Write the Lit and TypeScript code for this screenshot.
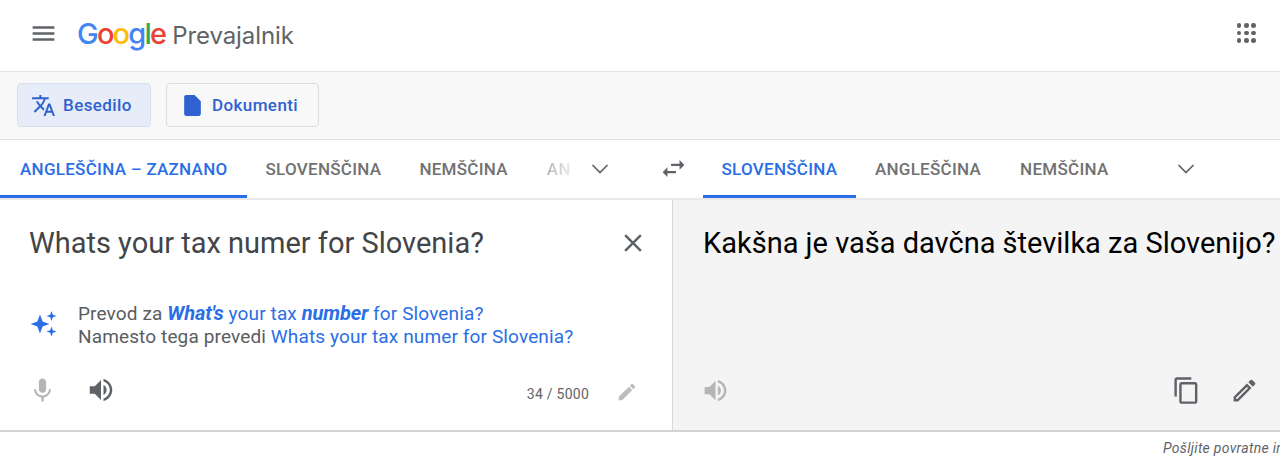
import { LitElement, html, css } from "lit";
import { customElement } from "lit/decorators.js";

const icon = (d: string, size: number, color: string, cls = "") => html`<svg class=${cls} width=${size} height=${size} viewBox="0 0 24 24" fill=${color}><path d=${d}></path></svg>`;
const chevron = html`<svg width="18" height="10" viewBox="0 0 18 10" fill="none" stroke="#5f6368" stroke-width="1.7"><path d="M1.500 1 9 8.500 16.500 1"></path></svg>`;

const SPEAKER = "M3 9v6h4l5 5V4L7 9H3zm13.5 3c0-1.77-1.02-3.29-2.5-4.03v8.05c1.48-.73 2.5-2.25 2.5-4.02zM14 3.23v2.06c2.89.86 5 3.54 5 6.71s-2.11 5.85-5 6.71v2.06c4.01-.91 7-4.49 7-8.77s-2.99-7.86-7-8.77z";
const PENCIL = "M3 17.25V21h3.75L17.81 9.94l-3.75-3.75L3 17.25zM20.71 7.04c.39-.39.39-1.02 0-1.41l-2.34-2.34c-.39-.39-1.02-.39-1.41 0l-1.83 1.83 3.75 3.75 1.83-1.83z";
const PENCIL_OUT = "M3 17.25V21h3.75L17.81 9.94l-3.75-3.75L3 17.25zM5.92 19H5v-.92l9.06-9.06.92.92L5.92 19zM20.71 5.63l-2.34-2.34c-.2-.2-.45-.29-.71-.29s-.51.1-.7.29l-1.83 1.83 3.75 3.75 1.83-1.83c.39-.39.39-1.02 0-1.41z";
const COPY = "M16 1H4c-1.1 0-2 .9-2 2v14h2V3h12V1zm3 4H8c-1.1 0-2 .9-2 2v14c0 1.1.9 2 2 2h11c1.1 0 2-.9 2-2V7c0-1.1-.9-2-2-2zm0 16H8V7h11v14z";
const MIC = "M12 14c1.66 0 3-1.34 3-3V5c0-1.66-1.34-3-3-3S9 3.34 9 5v6c0 1.66 1.34 3 3 3zm5.3-3c0 3-2.54 5.1-5.3 5.1S6.7 14 6.7 11H5c0 3.41 2.72 6.23 6 6.72V21h2v-3.28c3.28-.48 6-3.3 6-6.72h-1.7z";
const DOC = "M14 2H6c-1.1 0-2 .9-2 2v16c0 1.1.9 2 2 2h12c1.1 0 2-.9 2-2V8l-6-6z";
const TRANSLATE = "M12.87 15.07l-2.54-2.51.03-.03c1.74-1.94 2.98-4.17 3.71-6.53H17V4h-7V2H8v2H1v1.99h11.17C11.5 7.92 10.44 9.75 9 11.35 8.07 10.32 7.3 9.19 6.69 8h-2c.73 1.63 1.73 3.17 2.98 4.56l-5.09 5.02L4 19l5-5 3.11 3.11.76-2.04zM18.5 10h-2L12 22h2l1.12-3h4.75L21 22h2l-4.5-12zm-2.62 7l1.62-4.33L19.12 17h-3.24z";
const SWAP = "M6.99 11L3 15l3.99 4v-3H14v-2H6.99v-3zM21 9l-3.99-4v3H10v2h7.01v3L21 9z";
const MENU = "M3 18h18v-2H3v2zm0-5h18v-2H3v2zm0-7v2h18V6H3z";
const CLOSE = "M19 6.41L17.59 5 12 10.59 6.41 5 5 6.41 10.59 12 5 17.59 6.41 19 12 13.41 17.59 19 19 17.59 13.41 12z";

@customElement("app-root")
export class AppRoot extends LitElement {
  static styles = css`
    :host { display: block; width: 1280px; height: 462px; overflow: hidden; background: #fff; font-family: Roboto, "Liberation Sans", sans-serif; color: #3c4043; }
    svg { display: block; flex: none; }
    header { height: 72px; box-sizing: border-box; display: flex; align-items: center; padding: 0 24px 5px 29px; border-bottom: 1px solid #e4e5e7; }
    .logo { display: flex; align-items: baseline; margin-left: 19px; flex: 1; font-family: Inter, sans-serif; }
    .g { font-size: 29px; letter-spacing: -1.8px; font-weight: 500; line-height: 1; }
    .b { color: #4285f4; } .r { color: #ea4335; } .y { color: #fbbc05; } .gn { color: #34a853; }
    .pname { font-size: 24px; letter-spacing: -0.1px; color: #5f6368; margin-left: 7px; line-height: 1; }
    .apps { display: grid; grid-template-columns: repeat(3, 4.6px); gap: 2.8px; }
    .apps i { width: 4.6px; height: 4.6px; border-radius: 50%; background: #5f6368; }
    .bar { height: 68px; box-sizing: border-box; background: #f8f8f9; border-bottom: 1px solid #e0e1e3; display: flex; align-items: flex-start; gap: 15px; padding: 11px 0 0 17px; }
    .btn { height: 44px; box-sizing: border-box; border: 1px solid #dadce0; border-radius: 4px; display: flex; align-items: center; gap: 7px; padding-left: 13px; font-size: 17px; font-weight: 500; color: #2f62d0; letter-spacing: .4px; }
    .btn.on { background: #e6ecf8; border-color: #d8dfec; width: 134px; }
    .btn.off { width: 153px; }
    .tabs { height: 60px; box-sizing: border-box; display: flex; border-bottom: 2px solid #e8e8e8; }
    .side { display: flex; position: relative; height: 58px; }
    .side.l { width: 639px; }
    .side.r { flex: 1; }
    .tab { height: 58px; box-sizing: border-box; padding: 0 19px 1px; display: flex; align-items: center; font-size: 17px; font-weight: 500; letter-spacing: .28px; color: #717171; white-space: nowrap; }
    .side.l .tab:first-child { padding-left: 20px; padding-right: 19px; }
    .side.r .tab:first-child { padding-left: 18.500px; padding-right: 18.500px; }
    .side.r .tab:nth-child(3) { padding-left: 20px; }
    .tab.on { color: #2a6ee6; position: relative; }
    .tab.on::after { content: ""; position: absolute; left: 0; right: 0; bottom: 0; height: 3px; background: #2a6ee6; }
    .fade { width: 24px; overflow: hidden; padding: 0 0 1px; margin-left: 20px; background: linear-gradient(90deg, #b4b4b4, #eeeeee); -webkit-background-clip: text; color: transparent; }
    .chev { position: absolute; top: 24px; }
    .swap { width: 64px; display: flex; align-items: center; padding-left: 19.500px; padding-bottom: 1px; box-sizing: border-box; height: 58px; }
    .panels { height: 232px; box-sizing: border-box; display: grid; grid-template-columns: 673px 1fr; border-bottom: 2px solid #d2d3d4; }
    .left { background: #fff; display: flex; flex-direction: column; padding: 24px 29px 0 29px; border-right: 1px solid #d8d8d8; box-sizing: border-box; min-width: 0; }
    .right { background: #f4f4f4; padding: 24px 0 0 30px; display: flex; flex-direction: column; }
    .src { font-size: 29px; line-height: 38px; color: #424548; display: flex; justify-content: space-between; align-items: center; white-space: nowrap; }
    .close { margin-right: -5px; }
    .dst { font-size: 29px; line-height: 38px; color: #000; white-space: nowrap; }
    .sugg { display: flex; align-items: center; margin-top: 40px; gap: 19px; font-size: 19px; line-height: 23px; color: #5a5d60; letter-spacing: .13px; white-space: nowrap; }
    .spark { position: relative; top: -2px; }
    .sugg a { color: #2a6ee6; }
    .sugg b { font-size: 20px; font-style: italic; font-weight: 700; letter-spacing: -.1px; }
    .foot, .rfoot { margin-top: auto; display: flex; align-items: center; height: 30px; margin-bottom: 25px; }
    .mic { margin-left: -1.500px; }
    .rspk { margin-left: -2px; }
    .count { margin-left: auto; font-size: 14px; color: #5f6368; letter-spacing: .25px; margin-right: 27px; margin-top: 8px; }
    .pencil { margin-right: 5px; margin-top: 4px; }
    .gap30 { width: 29.500px; }
    .gap29 { width: 29px; }
    .end { width: 21.500px; }
    .spacer { flex: 1; }
    .note { font-size: 14px; font-style: italic; color: #5f6368; white-space: nowrap; line-height: 16px; padding: 8px 0 0 1163px; letter-spacing: .3px; overflow: hidden; }
  `;

  render() {
    return html`
      <header>
        ${icon(MENU, 29, "#5f6368")}
        <div class="logo">
          <span class="g"><span class="b">G</span><span class="r">o</span><span class="y">o</span><span class="b">g</span><span class="gn">l</span><span class="r">e</span></span>
          <span class="pname">Prevajalnik</span>
        </div>
        <div class="apps">${Array.from({ length: 9 }, () => html`<i></i>`)}</div>
      </header>
      <div class="bar">
        <div class="btn on">${icon(TRANSLATE, 25, "#2f62d0")}Besedilo</div>
        <div class="btn off">${icon(DOC, 25, "#2f62d0")}Dokumenti</div>
      </div>
      <div class="tabs">
        <div class="side l">
          <div class="tab on">ANGLEŠČINA – ZAZNANO</div>
          <div class="tab">SLOVENŠČINA</div>
          <div class="tab">NEMŠČINA</div>
          <div class="tab fade">ANG</div>
          <span class="chev" style="left:591px">${chevron}</span>
        </div>
        <div class="swap">${icon(SWAP, 29, "#5f6368")}</div>
        <div class="side r">
          <div class="tab on">SLOVENŠČINA</div>
          <div class="tab">ANGLEŠČINA</div>
          <div class="tab">NEMŠČINA</div>
          <span class="chev" style="left:474px">${chevron}</span>
        </div>
      </div>
      <div class="panels">
        <section class="left">
          <div class="src">Whats your tax numer for Slovenia? ${icon(CLOSE, 30, "#5f6368", "close")}</div>
          <div class="sugg">
            <svg class="spark" width="30" height="30" viewBox="0 0 30 30" fill="#2a6ee6"><path d="M11 6.500 13.600 13.400 20.500 16 13.600 18.600 11 25.500 8.400 18.600 1.500 16 8.400 13.400Z"></path><path d="M22.500 3 23.800 6.700 27.500 8 23.800 9.300 22.500 13 21.200 9.300 17.500 8 21.200 6.700Z"></path><path d="M22.500 18.500 23.800 22.200 27.500 23.500 23.800 24.800 22.500 28.500 21.200 24.800 17.500 23.500 21.200 22.200Z"></path></svg>
            <div>
              <div>Prevod za <a><b>What's</b> your tax <b>number</b> for Slovenia?</a></div>
              <div>Namesto tega prevedi <a>Whats your tax numer for Slovenia?</a></div>
            </div>
          </div>
          <div class="foot">
            ${icon(MIC, 29, "#b5b5b5", "mic")}
            <span class="gap30"></span>
            ${icon(SPEAKER, 30, "#5f6368")}
            <span class="count">34 / 5000</span>
            ${icon(PENCIL, 22, "#bdbdbd", "pencil")}
          </div>
        </section>
        <section class="right">
          <div class="dst">Kakšna je vaša davčna številka za Slovenijo?</div>
          <div class="rfoot">
            ${icon(SPEAKER, 29, "#b5b5b5", "rspk")}
            <span class="spacer"></span>
            ${icon(COPY, 29, "#5f6368")}
            <span class="gap29"></span>
            ${icon(PENCIL_OUT, 29, "#5f6368")}
            <span class="end"></span>
          </div>
        </section>
      </div>
      <div class="note">Pošljite povratne informacije</div>
    `;
  }
}
